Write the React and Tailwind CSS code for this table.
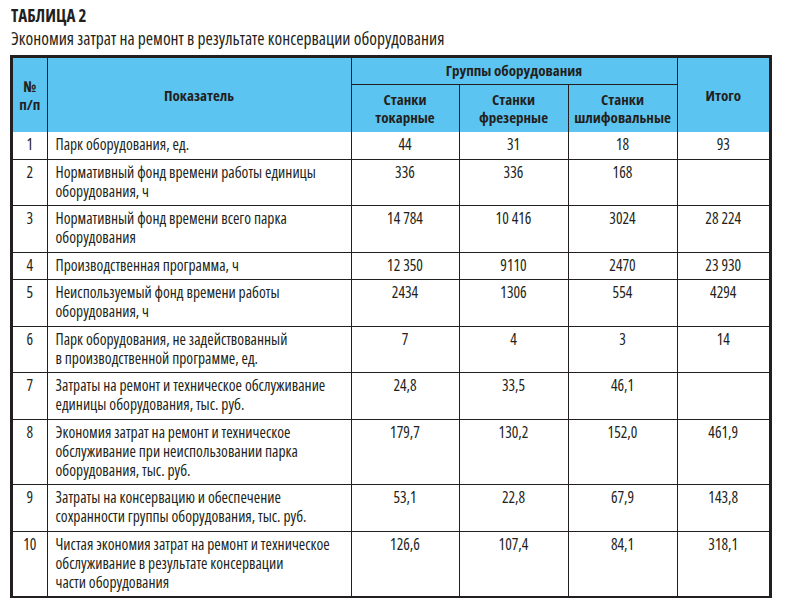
const rows = [
  ['1', ['Парк оборудования, ед.'], '44', '31', '18', '93'],
  ['2', ['Нормативный фонд времени работы единицы', 'оборудования, ч'], '336', '336', '168', ''],
  ['3', ['Нормативный фонд времени всего парка', 'оборудования'], '14 784', '10 416', '3024', '28 224'],
  ['4', ['Производственная программа, ч'], '12 350', '9110', '2470', '23 930'],
  ['5', ['Неиспользуемый фонд времени работы', 'оборудования, ч'], '2434', '1306', '554', '4294'],
  ['6', ['Парк оборудования, не задействованный', 'в производственной программе, ед.'], '7', '4', '3', '14'],
  ['7', ['Затраты на ремонт и техническое обслуживание', 'единицы оборудования, тыс. руб.'], '24,8', '33,5', '46,1', ''],
  ['8', ['Экономия затрат на ремонт и техническое', 'обслуживание при неиспользовании парка', 'оборудования, тыс. руб.'], '179,7', '130,2', '152,0', '461,9'],
  ['9', ['Затраты на консервацию и обеспечение', 'сохранности группы оборудования, тыс. руб.'], '53,1', '22,8', '67,9', '143,8'],
  ['10', ['Чистая экономия затрат на ремонт и техническое', 'обслуживание в результате консервации', 'части оборудования'], '126,6', '107,4', '84,1', '318,1'],
];

const line = 'border-[#231f20]';

export default function App() {
  return (
    <div
      className="w-[785px] h-[608px] bg-white text-[#231f20] pl-[10px] pt-[6px] font-stretch-condensed"
      style={{ fontFamily: '"Open Sans", sans-serif' }}
    >
      <div className="pl-[1px] text-[17px] leading-[20px] font-bold">ТАБЛИЦА 2</div>
      <div className="pl-[1px] mt-[2px] text-[17.5px] leading-[20px]">
        Экономия затрат на ремонт в результате консервации оборудования
      </div>
      <div className={`mt-[7px] w-[762px] border-[3px] border-b-[2px] ${line}`}>
        <table className="w-full table-fixed border-collapse text-[15.5px] leading-[19px]">
          <colgroup>
            <col className="w-[34px]" />
            <col className="w-[304px]" />
            <col className="w-[108px]" />
            <col className="w-[109px]" />
            <col className="w-[109px]" />
            <col className="w-[92px]" />
          </colgroup>
          <thead className="bg-[#5bc4f1] font-bold text-[15px]">
            <tr className="h-[26px]">
              <th rowSpan={2} className="align-middle text-center leading-[18px]">
                №<br />п/п
              </th>
              <th rowSpan={2} className={`border-l ${line} align-middle text-center`}>
                Показатель
              </th>
              <th colSpan={3} className={`border-l ${line} align-middle text-center`}>
                Группы оборудования
              </th>
              <th rowSpan={2} className={`border-l ${line} align-middle text-center`}>
                Итого
              </th>
            </tr>
            <tr className="h-[48px]">
              <th className={`border-l border-t ${line} align-middle text-center leading-[18px]`}>
                Станки<br />токарные
              </th>
              <th className={`border-l border-t ${line} align-middle text-center leading-[18px]`}>
                Станки<br />фрезерные
              </th>
              <th className={`border-l border-t ${line} align-middle text-center leading-[18px]`}>
                Станки<br />шлифовальные
              </th>
            </tr>
          </thead>
          <tbody>
            {rows.map((r, i) => {
              const bt = i === 0 ? '' : 'border-t';
              const cell = `${bt} ${line} align-top pt-[3px] pb-[4.5px]`;
              return (
                <tr key={r[0]}>
                  <td className={`${cell} text-center`}>{r[0]}</td>
                  <td className={`${cell} border-l pl-2 text-left`}>
                    {r[1].map((t, k) => (
                      <div key={k}>{t}</div>
                    ))}
                  </td>
                  <td className={`${cell} border-l text-center`}>{r[2]}</td>
                  <td className={`${cell} border-l text-center`}>{r[3]}</td>
                  <td className={`${cell} border-l text-center`}>{r[4]}</td>
                  <td className={`${cell} border-l text-center`}>{r[5]}</td>
                </tr>
              );
            })}
          </tbody>
        </table>
      </div>
    </div>
  );
}
